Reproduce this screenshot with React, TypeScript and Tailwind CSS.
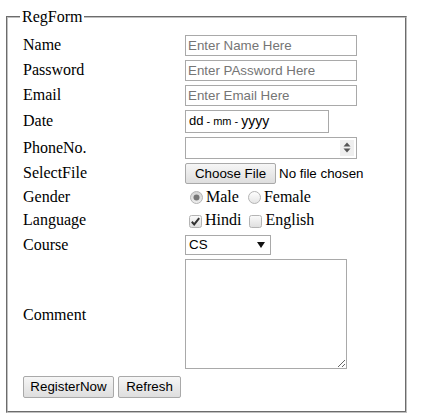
import React from 'react';

const serif = "font-['Liberation_Serif','Times_New_Roman',serif]";
const sans = "font-['Liberation_Sans',Arial,sans-serif]";

const inputCls = `block h-[21px] w-[172px] border border-[#a9a9a9] bg-white px-[2px] text-[13.33px] leading-[normal] text-black placeholder:text-[#757575] outline-none ${sans}`;

const buttonCls = `rounded-[2px] border border-[#a9a9a9] bg-gradient-to-b from-[#f6f6f6] to-[#dedede] px-[6px] text-[13.33px] leading-[normal] text-black ${sans}`;

const Label: React.FC<{ children: React.ReactNode }> = ({ children }) => (
  <td className={`w-[160px] p-px align-middle text-[16px] leading-[normal] text-black ${serif}`}>
    {children}
  </td>
);

const Radio: React.FC<{ checked?: boolean }> = ({ checked }) => (
  <svg width="13" height="13" viewBox="0 0 13 13" className="ml-[5px] mr-[3px] mt-[2px] shrink-0">
    <defs>
      <linearGradient id={checked ? 'rg1' : 'rg0'} x1="0" y1="0" x2="0" y2="1">
        <stop offset="0" stopColor={checked ? '#d4d4d4' : '#ffffff'} />
        <stop offset="1" stopColor={checked ? '#eeeeee' : '#e4e4e4'} />
      </linearGradient>
    </defs>
    <circle cx="6.5" cy="6.5" r="6" fill={`url(#${checked ? 'rg1' : 'rg0'})`} stroke="#b4b4b4" strokeWidth="1" />
    {checked && <circle cx="6.5" cy="6.5" r="3" fill="#777777" />}
  </svg>
);

const Checkbox: React.FC<{ checked?: boolean }> = ({ checked }) => (
  <svg width="13" height="13" viewBox="0 0 13 13" className="ml-[4px] mr-[3px] mt-[2px] shrink-0">
    <defs>
      <linearGradient id="cbg" x1="0" y1="0" x2="0" y2="1">
        <stop offset="0" stopColor="#fbfbfb" />
        <stop offset="1" stopColor="#dedede" />
      </linearGradient>
    </defs>
    <rect x="0.5" y="0.5" width="12" height="12" rx="2" fill="url(#cbg)" stroke="#b4b4b4" />
    {checked && <path d="M2.8 6.8 L5.2 9.4 L10.2 3.2" fill="none" stroke="#333333" strokeWidth="2" />}
  </svg>
);

const App: React.FC = () => {
  return (
    <div className="min-h-[419px] w-[422px] bg-white pl-[6px] pt-[8px]">
      <fieldset className="w-[401px] border-2 border-[#c0c0c0] px-[12px] pb-[10px] pt-[5.6px] [border-style:groove]">
        <legend className={`px-[2px] text-[16px] leading-[normal] text-black ${serif}`}>RegForm</legend>
        <table className="border-separate border-spacing-[2px]">
          <tbody>
            <tr>
              <Label>Name</Label>
              <td className="p-px">
                <input className={inputCls} placeholder="Enter Name Here" />
              </td>
            </tr>
            <tr>
              <Label>Password</Label>
              <td className="p-px">
                <input type="password" className={inputCls} placeholder="Enter PAssword Here" />
              </td>
            </tr>
            <tr>
              <Label>Email</Label>
              <td className="p-px">
                <input className={inputCls} placeholder="Enter Email Here" />
              </td>
            </tr>
            <tr>
              <Label>Date</Label>
              <td className="p-px">
                <div className={`flex h-[23px] w-[144px] items-center border border-[#a9a9a9] bg-white px-[3px] text-[13px] text-black ${sans}`}>
                  <span>dd</span>
                  <span className="px-[3px] text-[11px]">-</span>
                  <span className="text-[11px]">mm</span>
                  <span className="px-[3px] text-[11px]">-</span>
                  <span className="text-[14px]">yyyy</span>
                </div>
              </td>
            </tr>
            <tr>
              <Label>PhoneNo.</Label>
              <td className="p-px">
                <div className="flex h-[22px] w-[172px] items-center justify-end border border-[#a9a9a9] bg-white pr-[2px]">
                  <div className="flex h-[16px] w-[14px] items-center justify-center bg-[#efefef]">
                    <svg width="8" height="11" viewBox="0 0 8 11">
                      <path d="M4 0.5 L7.5 4.5 L0.5 4.5 Z" fill="#555" />
                      <path d="M4 10.5 L7.5 6.5 L0.5 6.5 Z" fill="#555" />
                    </svg>
                  </div>
                </div>
              </td>
            </tr>
            <tr>
              <Label>SelectFile</Label>
              <td className="p-px">
                <div className="flex items-center">
                  <button className={`${buttonCls} h-[21px] w-[91px]`}>Choose File</button>
                  <span className={`ml-[3px] text-[13.33px] leading-[normal] text-black ${sans}`}>No file chosen</span>
                </div>
              </td>
            </tr>
            <tr>
              <Label>Gender</Label>
              <td className="p-px">
                <div className={`flex h-[18px] items-center text-[16px] leading-[normal] text-black ${serif}`}>
                  <Radio checked />
                  <span>Male</span>
                  <span className="w-[4px]" />
                  <Radio />
                  <span>Female</span>
                </div>
              </td>
            </tr>
            <tr>
              <Label>Language</Label>
              <td className="p-px">
                <div className={`flex h-[21px] items-center text-[16px] leading-[normal] text-black ${serif}`}>
                  <Checkbox checked />
                  <span>Hindi</span>
                  <span className="w-[4px]" />
                  <Checkbox />
                  <span>English</span>
                </div>
              </td>
            </tr>
            <tr>
              <Label>Course</Label>
              <td className="p-px">
                <div className={`flex h-[20px] w-[86px] items-center justify-between border border-[#a9a9a9] bg-white pl-[3px] pr-[5px] text-[13.33px] text-black ${sans}`}>
                  <span>CS</span>
                  <svg width="8" height="6" viewBox="0 0 8 6">
                    <path d="M0 0 L8 0 L4 6 Z" fill="#111" />
                  </svg>
                </div>
              </td>
            </tr>
            <tr>
              <Label>Comment</Label>
              <td className="p-px pb-[4px]">
                <textarea className={`block h-[110px] w-[162px] resize border border-[#a9a9a9] bg-white p-[2px] text-[13.33px] outline-none ${sans}`} />
              </td>
            </tr>
            <tr>
              <td colSpan={2} className="p-px">
                <div className="flex gap-[4px]">
                  <button className={`${buttonCls} h-[22px] w-[91px]`}>RegisterNow</button>
                  <button className={`${buttonCls} h-[22px] w-[63px]`}>Refresh</button>
                </div>
              </td>
            </tr>
          </tbody>
        </table>
      </fieldset>
    </div>
  );
};

export default App;
